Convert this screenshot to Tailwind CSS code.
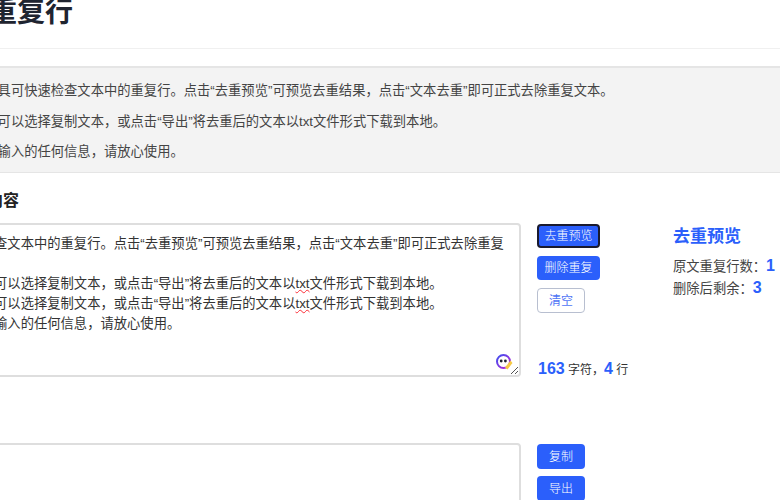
<!DOCTYPE html>
<html lang="zh-CN">
<head>
  <meta charset="UTF-8" />
  <title>去除重复行</title>
  <script src="https://cdn.jsdelivr.net/npm/@tailwindcss/browser@4"></script>
</head>
<body class="w-[780px] h-[500px] overflow-hidden bg-white font-['Liberation_Sans','Noto_Sans_CJK_SC',sans-serif] text-[#333]">
  <main class="w-[1020px] ml-[-120px]">
    <!-- title -->
    <div class="h-[50px] border-b border-[#f0f0f0] pl-[53px]">
      <h1 class="text-[28px] leading-[28px] font-bold text-[#1f2430] mt-[-1px] pt-0">去除重复行</h1>
    </div>

    <!-- notes -->
    <div class="mt-[17px] ml-[71px] h-[107px] bg-[#f3f3f3] border-t-[2px] border-b border-[#e5e5e5] pl-[20px] pt-[13px] text-[13.3px] leading-[19px] text-[#444]">
      <p>本工具可快速检查文本中的重复行。点击“去重预览”可预览去重结果，点击“文本去重”即可正式去除重复文本。</p>
      <p class="mt-[12px]">用户可以选择复制文本，或点击“导出”将去重后的文本以txt文件形式下载到本地。</p>
      <p class="mt-[11px]">不存输入的任何信息，请放心使用。</p>
    </div>

    <h2 class="mt-[17px] ml-[75px] text-[16px] leading-[22px] font-bold text-[#222]">输入内容</h2>

    <!-- input row -->
    <div class="mt-[11px] ml-[10px] flex">
      <div class="relative w-[631px] h-[154px] shrink-0 border-[2px] border-[#dedede] rounded-[4px] pl-[9px] pt-[9px] text-[13.3px] leading-[20px] whitespace-nowrap text-[#333]">
        本工具可快速检查文本中的重复行。点击“去重预览”可预览去重结果，点击“文本去重”即可正式去除重复<br />
        文本。<br />
        去重完成后，您可以选择复制文本，或点击“导出”将去重后的文本以<span class="underline decoration-wavy decoration-red-500 decoration-1">txt</span>文件形式下载到本地。<br />
        去重完成后，您可以选择复制文本，或点击“导出”将去重后的文本以<span class="underline decoration-wavy decoration-red-500 decoration-1">txt</span>文件形式下载到本地。<br />
        本工具不保存您输入的任何信息，请放心使用。
        <svg class="absolute right-[6px] bottom-[4px]" width="18" height="18" viewBox="0 0 18 18" fill="none">
          <defs>
            <linearGradient id="ring" x1="0" y1="0" x2="1" y2="1">
              <stop offset="0" stop-color="#3b4ef0" />
              <stop offset="1" stop-color="#c026d3" />
            </linearGradient>
          </defs>
          <circle cx="8.5" cy="8.5" r="6.5" stroke="url(#ring)" stroke-width="2" />
          <circle cx="6.2" cy="8" r="1.4" fill="#1f2430" />
          <circle cx="10.4" cy="8" r="1.4" fill="#1f2430" />
          <path d="M15.5 7.5L10 14.5l2.5 2L17.5 10z" fill="#f6c945" />
        </svg>
        <svg class="absolute right-0 bottom-0" width="10" height="10" viewBox="0 0 10 10" fill="none" stroke="#555" stroke-width="1">
          <path d="M2 9L9 2M6 9L9 6" />
        </svg>
      </div>

      <div class="w-[152px] shrink-0 pl-[16px] h-[154px] flex flex-col items-start">
        <button class="mt-[1px] w-[63px] h-[24px] rounded-[4px] bg-[#2b5ffb] border-2 border-[#1a1a2e] text-white text-[12px] leading-none font-light">去重预览</button>
        <button class="mt-[8px] w-[63px] h-[24px] rounded-[4px] bg-[#2b5ffb] text-white text-[12px] leading-none font-light">删除重复</button>
        <button class="mt-[8px] w-[48px] h-[25px] rounded-[4px] bg-white border border-[#b8bfd0] text-[#4f75f5] text-[12px] leading-none">清空</button>
        <p class="mt-auto mb-[-3px] pl-[1px] text-[12px] leading-[20px] whitespace-nowrap text-[#333]"><b class="text-[16px] text-[#2b5ffb]">163</b> 字符，<b class="text-[16px] text-[#2b5ffb]">4</b> 行</p>
      </div>

      <div class="pt-[2px]">
        <h3 class="text-[17px] leading-[24px] font-bold text-[#2b5ffb]">去重预览</h3>
        <p class="mt-[6px] text-[13.3px] leading-[21px] text-[#444] whitespace-nowrap">原文重复行数：<b class="text-[16px] text-[#2b5ffb]">1</b></p>
        <p class="text-[13.3px] leading-[21px] text-[#444] whitespace-nowrap">删除后剩余：<b class="text-[16px] text-[#2b5ffb]">3</b></p>
      </div>
    </div>

    <!-- output row -->
    <div class="mt-[66px] ml-[10px] flex">
      <div class="w-[631px] h-[154px] shrink-0 border-[2px] border-[#dedede] rounded-[4px]"></div>
      <div class="pl-[16px] flex flex-col items-start">
        <button class="mt-[1px] w-[48px] h-[25px] rounded-[4px] bg-[#2b5ffb] text-white text-[12px] leading-none font-light">复制</button>
        <button class="mt-[7px] w-[48px] h-[25px] rounded-[4px] bg-[#2b5ffb] text-white text-[12px] leading-none font-light">导出</button>
      </div>
    </div>
  </main>
</body>
</html>
